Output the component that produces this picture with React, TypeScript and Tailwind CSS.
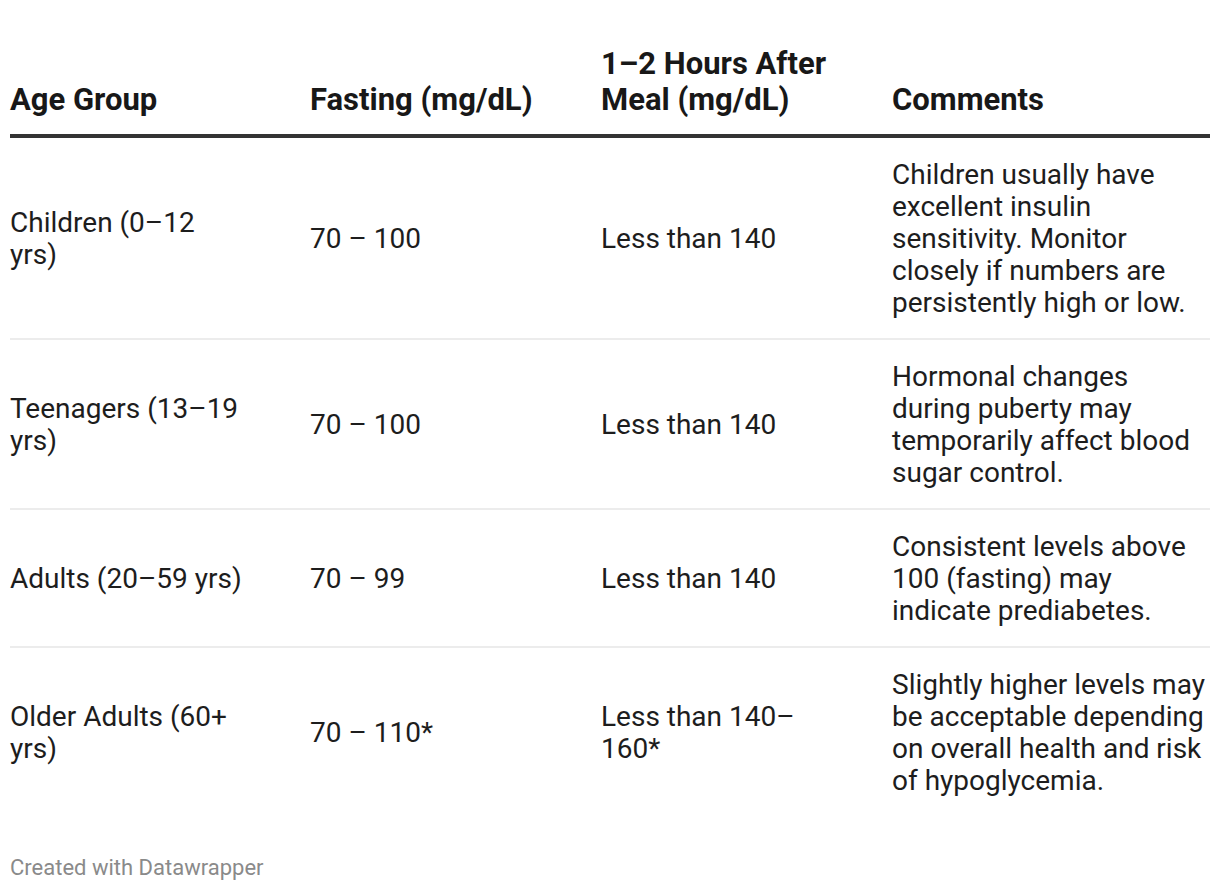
const rows = [
  {
    age: "Children (0–12 yrs)",
    fasting: "70 – 100",
    after: "Less than 140",
    comment:
      "Children usually have excellent insulin sensitivity. Monitor closely if numbers are persistently high or low.",
  },
  {
    age: "Teenagers (13–19 yrs)",
    fasting: "70 – 100",
    after: "Less than 140",
    comment: "Hormonal changes during puberty may temporarily affect blood sugar control.",
  },
  {
    age: "Adults (20–59 yrs)",
    fasting: "70 – 99",
    after: "Less than 140",
    comment: "Consistent levels above 100 (fasting) may indicate prediabetes.",
  },
  {
    age: "Older Adults (60+ yrs)",
    fasting: "70 – 110*",
    after: "Less than 140–160*",
    comment:
      "Slightly higher levels may be acceptable depending on overall health and risk of hypoglycemia.",
  },
];

const cols = "grid grid-cols-[300px_291px_291px_318px]";

export default function App() {
  return (
    <div className="min-h-screen bg-white px-[10px] pt-[46px] font-['Roboto',sans-serif] text-[#1d1d1d]">
      <div className="w-[1200px]">
        <div className={`${cols} items-end border-b-[4px] border-[#333333] pb-[16px] text-[31px] font-bold leading-[36px] text-[#181818]`}>
          <div className="pr-[40px]">Age Group</div>
          <div className="pr-[40px]">Fasting (mg/dL)</div>
          <div className="pr-[40px]">1–2 Hours After Meal (mg/dL)</div>
          <div>Comments</div>
        </div>

        {rows.map((r, i) => (
          <div
            key={r.age}
            className={`${cols} items-center pt-[21px] pb-[19px] text-[28px] leading-[32px] ${
              i < rows.length - 1 ? "border-b-2 border-[#ececec]" : ""
            }`}
          >
            <div className="pr-[66px]">{r.age}</div>
            <div className="pr-[40px]">{r.fasting}</div>
            <div className="pr-[57px]">{r.after}</div>
            <div className="pr-[2px]">{r.comment}</div>
          </div>
        ))}

        <div className="mt-[38px] text-[22px] leading-[28px] text-[#8a8a8a]">Created with Datawrapper</div>
      </div>
    </div>
  );
}
